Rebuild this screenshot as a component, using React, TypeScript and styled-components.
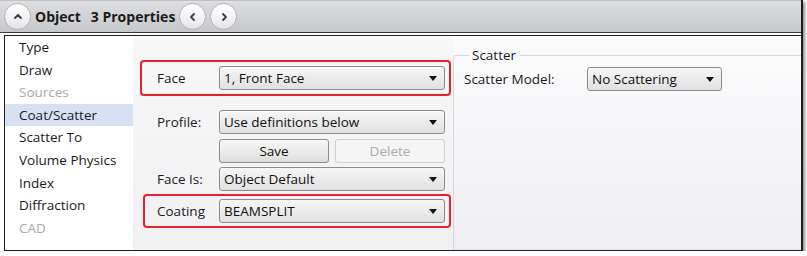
import React from "react";
import styled, { createGlobalStyle, css } from "styled-components";

const GlobalStyle = createGlobalStyle`
  html, body {
    margin: 0;
    padding: 0;
    background: #ffffff;
  }
  body {
    font-family: "Open Sans", "Noto Sans", "DejaVu Sans", sans-serif;
    font-size: 13.5px;
    color: #1b1b1b;
  }
`;

const NAV_ITEMS = [
  { label: "Type" },
  { label: "Draw" },
  { label: "Sources", disabled: true },
  { label: "Coat/Scatter", active: true },
  { label: "Scatter To" },
  { label: "Volume Physics" },
  { label: "Index" },
  { label: "Diffraction" },
  { label: "CAD", disabled: true },
];

const Chevron: React.FC<{ dir: "up" | "left" | "right" }> = ({ dir }) => {
  const d =
    dir === "up" ? "M3 7 L6 4 L9 7" : dir === "left" ? "M7 3 L4 6 L7 9" : "M5 3 L8 6 L5 9";
  return (
    <svg width="12" height="12" viewBox="0 0 12 12">
      <path d={d} fill="none" stroke="#3c3c3c" strokeWidth="1.8" strokeLinecap="round" strokeLinejoin="round" />
    </svg>
  );
};

const Arrow = () => (
  <svg width="8" height="5" viewBox="0 0 8 5">
    <path d="M0 0 H8 L4 5 Z" fill="#111" />
  </svg>
);

const Combo: React.FC<{ value: string; width?: number }> = ({ value, width }) => (
  <ComboBox fixedWidth={width}>
    <ComboText>{value}</ComboText>
    <Arrow />
  </ComboBox>
);

export default function App() {
  return (
    <>
      <GlobalStyle />
      <Window>
        <TitleBar>
          <RoundButton>
            <Chevron dir="up" />
          </RoundButton>
          <Title>Object</Title>
          <Title>3 Properties</Title>
          <NavButtons>
            <RoundButton>
              <Chevron dir="left" />
            </RoundButton>
            <RoundButton>
              <Chevron dir="right" />
            </RoundButton>
          </NavButtons>
        </TitleBar>

        <Body>
          <NavList>
            {NAV_ITEMS.map((item) => (
              <NavItem key={item.label} active={!!item.active} disabled={!!item.disabled}>
                {item.label}
              </NavItem>
            ))}
          </NavList>

          <MiddlePanel>
            <Highlight top={24} left={7} height={36}>
              <Label>Face</Label>
              <Combo value="1, Front Face" />
            </Highlight>

            <Row top={14}>
              <Label>Profile:</Label>
              <Combo value="Use definitions below" />
            </Row>

            <Row top={5}>
              <Label />
              <Buttons>
                <Button>Save</Button>
                <Button disabled>Delete</Button>
              </Buttons>
            </Row>

            <Row top={4}>
              <Label>Face Is:</Label>
              <Combo value="Object Default" />
            </Row>

            <Highlight top={3} left={10} height={34}>
              <Label>Coating</Label>
              <Combo value="BEAMSPLIT" />
            </Highlight>
          </MiddlePanel>

          <RightPanel>
            <Group>
              <Legend>Scatter</Legend>
              <GroupRow>
                <GroupLabel>Scatter Model:</GroupLabel>
                <Combo value="No Scattering" width={135} />
              </GroupRow>
            </Group>
          </RightPanel>
        </Body>
      </Window>
    </>
  );
}

const Window = styled.div`
  width: 801px;
  height: 251px;
  display: flex;
  flex-direction: column;
  border-right: 2px solid #1e1e1e;
  box-shadow: 2px 2px 3px rgba(0, 0, 0, 0.45);
  background: #ffffff;
`;

const TitleBar = styled.div`
  height: 33px;
  flex: none;
  display: flex;
  align-items: center;
  padding-left: 4px;
  box-sizing: border-box;
  background: linear-gradient(#dedfe2, #d2d3d6 50%, #c6c7cb);
  border-top: 1px solid #c0c0c0;
  border-bottom: 1px solid #3a3a3a;
`;

const RoundButton = styled.div`
  width: 25px;
  height: 25px;
  border-radius: 50%;
  border: 1px solid #b4b4b8;
  background: linear-gradient(#ffffff, #f2f2f2 60%, #e4e4e6);
  display: flex;
  align-items: center;
  justify-content: center;
  box-sizing: content-box;
`;

const Title = styled.span`
  font-family: "Open Sans", "Noto Sans", sans-serif;
  font-weight: 700;
  font-size: 14px;
  color: #1a1a1a;
  margin-left: 4px;

  & + & {
    margin-left: 10px;
  }
`;

const NavButtons = styled.div`
  display: flex;
  gap: 4px;
  margin-left: 4px;
`;

const Body = styled.div`
  flex: 1;
  display: flex;
  margin-top: 2px;
  margin-left: 4px;
  border: 1px solid #1e1e1e;
  border-right: none;
  min-height: 0;
`;

const NavList = styled.div`
  width: 128px;
  flex: none;
  background: #ffffff;
`;

interface NavItemProps {
  active: boolean;
  disabled: boolean;
}

const NavItem = styled.div<NavItemProps>`
  height: 22.6px;
  line-height: 22.6px;
  padding-left: 14px;
  color: ${({ disabled }) => (disabled ? "#a9a9a9" : "#1b1b1b")};
  white-space: nowrap;

  ${({ active }) =>
    active &&
    css`
      background: #d6e2f3;
    `}
`;

const MiddlePanel = styled.div`
  width: 320px;
  flex: none;
  display: flex;
  flex-direction: column;
  background: linear-gradient(#f7f7f8, #f1f1f3);
`;

interface BoxProps {
  top: number;
  left: number;
  height: number;
}

const Highlight = styled.div<BoxProps>`
  display: flex;
  align-items: center;
  margin-top: ${({ top }) => top}px;
  margin-left: ${({ left }) => left}px;
  margin-right: 2px;
  height: ${({ height }) => height}px;
  padding-left: ${({ left }) => 15 - (left - 7)}px;
  padding-right: 4px;
  border: 2px solid #e5222b;
  border-radius: 4px;
  box-sizing: border-box;
`;

const Row = styled.div<{ top: number }>`
  display: flex;
  align-items: center;
  margin-top: ${({ top }) => top}px;
  padding-left: 24px;
  padding-right: 8px;
  height: 24px;
`;

const Label = styled.div`
  width: 62px;
  flex: none;
  white-space: nowrap;
`;

const ComboBox = styled.div<{ fixedWidth?: number }>`
  flex: ${({ fixedWidth }) => (fixedWidth ? "none" : "1")};
  width: ${({ fixedWidth }) => (fixedWidth ? `${fixedWidth}px` : "auto")};
  height: 24px;
  box-sizing: border-box;
  display: flex;
  align-items: center;
  justify-content: space-between;
  padding: 0 7px 0 4px;
  border: 1px solid #8c8c8c;
  border-radius: 3px;
  background: linear-gradient(#f6f6f6, #ececec 50%, #e0e0e0);
`;

const ComboText = styled.span`
  white-space: nowrap;
  color: #111;
`;

const Buttons = styled.div`
  flex: 1;
  display: grid;
  grid-template-columns: 1fr 1fr;
  gap: 6px;
`;

const Button = styled.div<{ disabled?: boolean }>`
  height: 24px;
  box-sizing: border-box;
  display: flex;
  align-items: center;
  justify-content: center;
  border-radius: 3px;
  border: 1px solid ${({ disabled }) => (disabled ? "#cfcfcf" : "#8c8c8c")};
  color: ${({ disabled }) => (disabled ? "#aaaaaa" : "#111")};
  background: ${({ disabled }) =>
    disabled ? "#f5f5f6" : "linear-gradient(#f6f6f6, #ececec 50%, #dcdcdc)"};
`;

const RightPanel = styled.div`
  flex: 1;
  display: flex;
  flex-direction: column;
  background: linear-gradient(#fbfbfc, #efeff3);
`;

const Group = styled.fieldset`
  flex: 1;
  margin: 10px 0 0 0;
  padding: 0 0 0 10px;
  border: 1px solid #d3d8dc;
  border-right: none;
  border-bottom: none;
  border-top-left-radius: 3px;
  min-width: 0;
`;

const Legend = styled.legend`
  padding: 0 3px;
  margin-left: 5px;
  color: #1b1b1b;
  line-height: 18px;
`;

const GroupRow = styled.div`
  display: flex;
  align-items: center;
  margin-top: 3px;
  height: 24px;
`;

const GroupLabel = styled.div`
  width: 123px;
  flex: none;
  white-space: nowrap;
`;
